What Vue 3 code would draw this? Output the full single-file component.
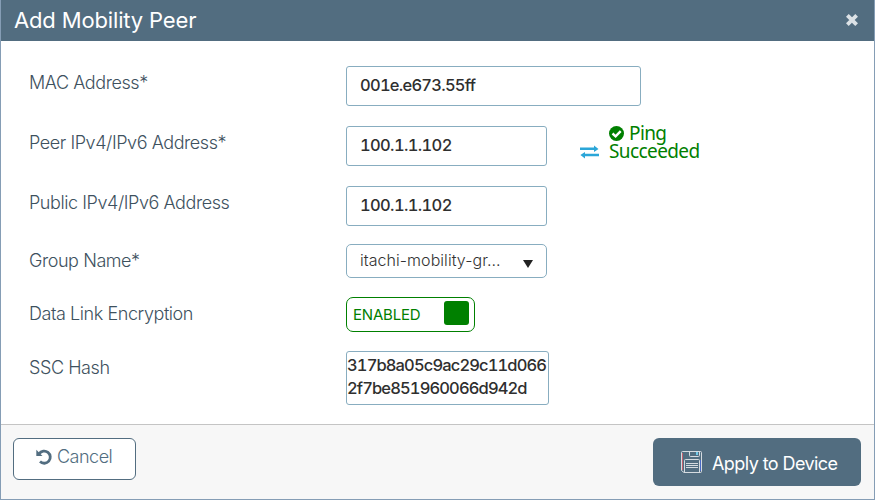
<script setup>
import { ref } from 'vue'

const mac = ref('001e.e673.55ff')
const peerIp = ref('100.1.1.102')
const publicIp = ref('100.1.1.102')
const enabled = ref(true)
</script>

<template>
  <div class="dialog">
    <header class="header">
      <h1 class="title">Add Mobility Peer</h1>
      <svg class="close" viewBox="0 0 12 12" width="12" height="12">
        <path d="M2.7 2.7 9.3 9.3M9.3 2.7 2.7 9.3" />
      </svg>
    </header>

    <main class="body">
      <div class="row">
        <label class="label">MAC Address*</label>
        <div class="field wide">{{ mac }}</div>
      </div>
      <div class="row">
        <label class="label">Peer IPv4/IPv6 Address*</label>
        <div class="field">{{ peerIp }}</div>
        <div class="ping">
          <svg class="swap" viewBox="0 0 19 14" width="19" height="14">
            <path d="M0 2.6h14V0.6L18.5 4 14 7.1V5H0z" />
            <path d="M19 8.8H5V6.9L0.4 10.1 5 13.4V11.2h14z" />
          </svg>
          <div class="result">
            <svg class="check" viewBox="0 0 15 15" width="15" height="15">
              <circle cx="7.5" cy="7.5" r="7.5" />
              <path d="M3.5 7.5 6.6 10.3 11.7 5.1" />
            </svg>
            <span>Ping Succeeded</span>
          </div>
        </div>
      </div>
      <div class="row">
        <label class="label">Public IPv4/IPv6 Address</label>
        <div class="field">{{ publicIp }}</div>
      </div>
      <div class="row group">
        <label class="label">Group Name*</label>
        <div class="select">
          <span>itachi-mobility-gr...</span>
          <svg class="caret" viewBox="0 0 10 8" width="10" height="8"><path d="M0 0h10L5 8z" /></svg>
        </div>
      </div>
      <div class="row link">
        <label class="label">Data Link Encryption</label>
        <div class="toggle">
          <span>{{ enabled ? 'ENABLED' : 'DISABLED' }}</span>
          <span class="knob"></span>
        </div>
      </div>
      <div class="row">
        <label class="label">SSC Hash</label>
        <div class="hash">317b8a05c9ac29c11d066<br />2f7be851960066d942d</div>
      </div>
    </main>

    <footer class="footer">
      <button class="cancel">
        <svg class="undo" viewBox="0 0 16 16" width="16" height="16">
          <path class="arc" d="M3.2 4.6A6.1 6.1 0 1 1 4 12.6" />
          <path class="head" d="M0.3 0.8V7H6.5z" />
        </svg>
        <span>Cancel</span>
      </button>
      <button class="apply">
        <svg class="save" viewBox="0 0 21 22" width="21" height="22">
          <path class="r" d="M1.5 2v17" />
          <path class="b" d="M19.5 9v11" />
          <path class="c" d="M15 1h2v3h-2z" />
          <path class="w" d="M.5 1.5a1 1 0 0 1 1-1h18a1 1 0 0 1 1 1v19a1 1 0 0 1-1 1H3L.5 19.5z" />
          <path class="w" d="M8.5.5v4a1 1 0 0 0 1 1h8a1 1 0 0 0 1-1v-4M3.5 21.5V9.5a1 1 0 0 1 1-1h13a1 1 0 0 1 1 1v12" />
          <path class="w" d="M5 12.5h12M5 14.5h12M5 16.5h12" />
        </svg>
        <span>Apply to Device</span>
      </button>
    </footer>
  </div>
</template>

<style>
body {
  margin: 0;
}
</style>

<style scoped>
.dialog {
  box-sizing: border-box;
  width: 875px;
  height: 500px;
  display: flex;
  flex-direction: column;
  border: 1px solid #859db5;
  border-top: 0;
  background: #fff;
  font-family: Inter, "Liberation Sans", sans-serif;
  overflow: hidden;
}
.header {
  flex-shrink: 0;
  height: 41px;
  margin: 0 -1px;
  padding: 0 17px 0 14px;
  box-sizing: border-box;
  display: flex;
  justify-content: space-between;
  background: #526d80;
}
.title {
  margin: 0;
  color: #fff;
  font-size: 22px;
  font-weight: 400;
  letter-spacing: -0.15px;
  line-height: 40px;
  white-space: nowrap;
}
.close {
  margin-top: 14px;
}
.close path {
  stroke: #dce2e6;
  stroke-width: 3.8;
  stroke-linecap: square;
}
.body {
  flex: 1;
  padding: 25px 0 0 28px;
}
.row {
  display: grid;
  grid-template-columns: 317px max-content 1fr;
  align-items: start;
  margin-bottom: 20px;
}
.row:nth-child(3) {
  margin-bottom: 18px;
}
.row.group,
.row.link {
  margin-bottom: 19px;
}
.row:last-child {
  margin-bottom: 0;
}
.label {
  padding-top: 7px;
  color: #3e515e;
  font-size: 18px;
  font-weight: 300;
  letter-spacing: -0.43px;
  line-height: 20px;
  white-space: nowrap;
}
.field {
  box-sizing: border-box;
  width: 201px;
  height: 40px;
  padding-left: 13px;
  border: 1px solid #88adc0;
  border-radius: 3px;
  color: #2f2f2f;
  font-size: 16.5px;
  font-weight: 500;
  font-variant-numeric: tabular-nums;
  letter-spacing: -0.65px;
  line-height: 36px;
}
.wide {
  width: 295px;
  letter-spacing: -0.75px;
}
.ping {
  display: flex;
  height: 40px;
  padding-left: 33px;
  color: #008000;
}
.swap {
  margin-top: 19px;
  fill: #2ba6d8;
}
.result {
  width: 100px;
  margin: -2px 0 0 10px;
  font-family: "Noto Sans", sans-serif;
  font-size: 19px;
  letter-spacing: -0.6px;
  line-height: 18px;
}
.check {
  margin-right: 5px;
  vertical-align: -1px;
  fill: #008000;
}
.check path {
  fill: none;
  stroke: #fff;
  stroke-width: 2.4;
}
.select {
  box-sizing: border-box;
  display: flex;
  justify-content: space-between;
  width: 201px;
  height: 34px;
  padding: 0 13px;
  border: 1px solid #88adc0;
  border-radius: 5px;
  color: #333;
  font-size: 16px;
  font-weight: 300;
  letter-spacing: 0.05px;
  line-height: 31px;
}
.caret {
  margin-top: 15px;
  fill: #222;
}
.toggle {
  box-sizing: border-box;
  display: flex;
  justify-content: space-between;
  width: 129px;
  height: 35px;
  padding: 3px 5px 0 6px;
  border: 1px solid #008000;
  border-radius: 7px;
  color: #008000;
  font-size: 15px;
  letter-spacing: -0.2px;
  line-height: 28px;
}
.knob {
  width: 25px;
  height: 24px;
  border-radius: 3px;
  background: #008000;
}
.hash {
  box-sizing: border-box;
  width: 203px;
  height: 54px;
  padding-top: 2px;
  border: 1px solid #88adc0;
  border-radius: 3px;
  color: #2f2f2f;
  font-size: 16.5px;
  font-weight: 500;
  font-variant-numeric: tabular-nums;
  letter-spacing: -0.87px;
  line-height: 23px;
  white-space: nowrap;
}
.footer {
  flex-shrink: 0;
  box-sizing: border-box;
  height: 75px;
  padding: 13px 13px 0 12px;
  display: flex;
  justify-content: space-between;
  align-items: flex-start;
  border-top: 1px solid #c4c4c4;
  background: #f7f7f7;
}
button {
  box-sizing: border-box;
  display: flex;
  margin: 0;
  font-family: inherit;
  white-space: nowrap;
}
.cancel {
  width: 123px;
  height: 42px;
  padding: 0 0 0 22px;
  border: 1px solid #526d80;
  border-radius: 6px;
  background: #fff;
  color: #526d80;
  font-size: 18px;
  font-weight: 300;
  letter-spacing: -0.5px;
  line-height: 36px;
}
.undo {
  margin: 10px 5px 0 0;
}
.arc {
  fill: none;
  stroke: #526d80;
  stroke-width: 2.8;
}
.head {
  fill: #526d80;
}
.apply {
  width: 208px;
  height: 48px;
  padding: 0 0 0 28px;
  border: 0;
  border-radius: 6px;
  background: #526d80;
  color: #fff;
  font-size: 18px;
  font-weight: 400;
  letter-spacing: -0.57px;
  line-height: 51px;
}
.save {
  margin: 13px 10px 0 0;
  fill: none;
}
.w {
  stroke: #d5dbe0;
}
.r {
  stroke: #c0606c;
}
.b {
  stroke: #4868c4;
}
.c {
  fill: #70c8e8;
}
</style>
